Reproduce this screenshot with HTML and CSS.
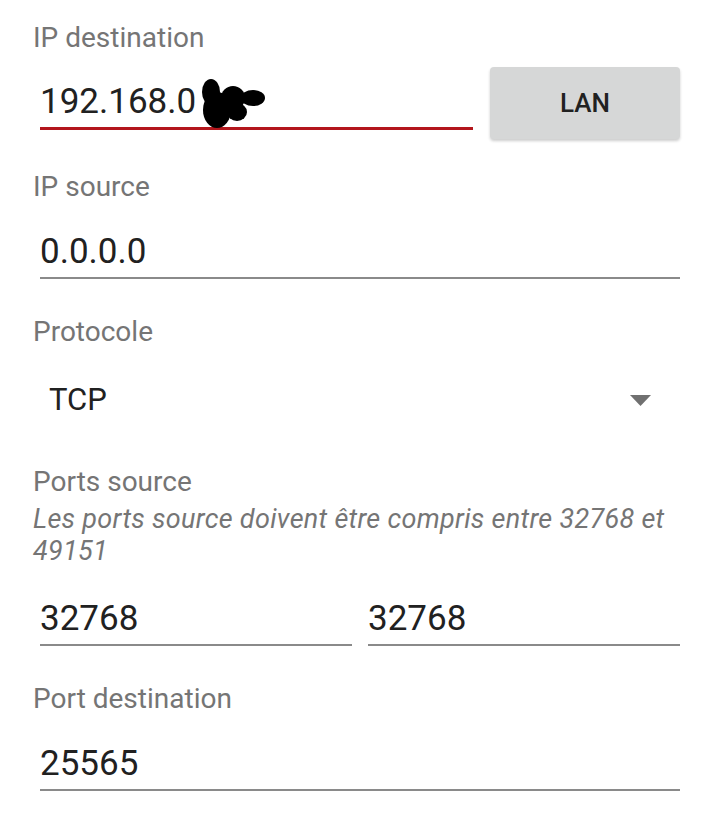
FILE: index.html
```html
<!DOCTYPE html>
<html>
  <head>
    <title>Redirection de port</title>
    <link rel="stylesheet" href="styles.css">
  </head>
  <body>
    <form class="rule-form">
      <label class="field-label">IP destination</label>
      <div class="ip-row">
        <div class="text-input is-focused">
          192.168.0
          <svg class="scribble" width="72" height="56" viewBox="0 0 72 56">
            <ellipse cx="14" cy="16" rx="9" ry="13" fill="#000"/>
            <ellipse cx="20" cy="34" rx="14" ry="18" fill="#000"/>
            <ellipse cx="36" cy="22" rx="12" ry="12" fill="#000"/>
            <ellipse cx="56" cy="22" rx="12" ry="8" fill="#000"/>
            <ellipse cx="40" cy="36" rx="10" ry="9" fill="#000"/>
          </svg>
        </div>
        <button type="button" class="lan-btn">LAN</button>
      </div>

      <label class="field-label gap-lg">IP source</label>
      <div class="text-input">0.0.0.0</div>

      <label class="field-label gap-md">Protocole</label>
      <div class="spinner">
        <span>TCP</span>
        <svg class="spinner-arrow" width="21" height="11" viewBox="0 0 21 11">
          <polygon points="0,0 21,0 10.5,11" fill="#707070"/>
        </svg>
      </div>

      <label class="field-label gap-xl">Ports source</label>
      <p class="helper">Les ports source doivent être compris entre 32768 et 49151</p>
      <div class="ports-row">
        <div class="text-input">32768</div>
        <div class="text-input">32768</div>
      </div>

      <label class="field-label gap-md">Port destination</label>
      <div class="text-input">25565</div>
    </form>
  </body>
</html>
```

FILE: styles.css
```css
body {
  margin: 0;
  background-color: #fff;
  font-family: Roboto, "Noto Sans", sans-serif;
}

.rule-form {
  padding: 21px 40px 0 33px;
}

.field-label {
  display: block;
  font-size: 28px;
  line-height: 34px;
  color: #757575;
}

.gap-md {
  margin-top: 36px;
}

.gap-lg {
  margin-top: 31px;
}

.gap-xl {
  margin-top: 45px;
}

.text-input {
  position: relative;
  margin: 26px 0 0 7px;
  padding-bottom: 3px;
  font-size: 35px;
  line-height: 44px;
  color: #212121;
  border-bottom: 2px solid #8a8a8a;
}

.text-input.is-focused {
  padding-top: 2px;
  padding-bottom: 3px;
  border-bottom: 3px solid #b3161c;
}

.scribble {
  position: absolute;
  left: 157px;
  top: -2px;
}

.ip-row {
  display: flex;
  align-items: flex-end;
  margin-top: 12px;
}

.ip-row .text-input {
  flex: 1;
  margin-top: 0;
  margin-bottom: 9px;
}

.lan-btn {
  width: 190px;
  height: 72px;
  margin-left: 17px;
  border: none;
  border-radius: 4px;
  background-color: #d6d7d7;
  box-shadow: 0 2px 3px rgba(0, 0, 0, 0.2);
  font-family: Roboto, sans-serif;
  font-size: 26px;
  font-weight: 500;
  color: #212121;
}

.spinner {
  display: flex;
  align-items: center;
  justify-content: space-between;
  margin-top: 31px;
  padding-left: 16px;
  padding-right: 29px;
  font-size: 31px;
  line-height: 40px;
  color: #212121;
}

.helper {
  margin: 4px 0 0;
  font-size: 27px;
  line-height: 32px;
  letter-spacing: 0.3px;
  font-style: italic;
  color: #757575;
}

.ports-row {
  display: flex;
  gap: 16px;
  margin-top: 30px;
  margin-left: 7px;
}

.ports-row .text-input {
  flex: 1;
  margin: 0;
}
```
